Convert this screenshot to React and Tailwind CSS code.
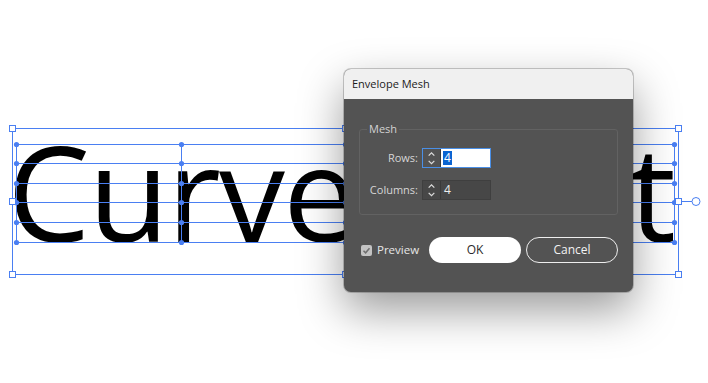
import React from "react";

const meshYs = [144.5, 163.5, 183.5, 202.5, 222.5, 242.5];
const meshXs = [16.5, 181.5, 345.5, 509.5, 674.5];
const handles = [
  [12.5, 128.5],
  [12.5, 201.5],
  [12.5, 274.5],
  [345.5, 128.5],
  [345.5, 274.5],
  [678.5, 128.5],
  [678.5, 201.5],
  [678.5, 274.5],
];

function Mesh() {
  const blue = "#4a7ff2";
  return (
    <svg className="absolute inset-0" width="708" height="383" viewBox="0 0 708 383">
      <rect x="12.5" y="128.5" width="666" height="146" fill="none" stroke={blue} strokeWidth="1" />
      {meshYs.map((y) => (
        <line key={"h" + y} x1="16.5" y1={y} x2="674.5" y2={y} stroke={blue} strokeWidth="1" />
      ))}
      {meshXs.map((x) => (
        <line key={"v" + x} x1={x} y1="144.5" x2={x} y2="242.5" stroke={blue} strokeWidth="1" />
      ))}
      {meshXs.map((x) =>
        meshYs.map((y) => <circle key={x + "-" + y} cx={x} cy={y} r="2.6" fill={blue} />)
      )}
      <line x1="681" y1="201.5" x2="692" y2="201.5" stroke={blue} strokeWidth="1" />
      <circle cx="696" cy="201.5" r="4" fill="white" stroke={blue} strokeWidth="1" />
      {handles.map(([x, y]) => (
        <rect key={x + "_" + y} x={x - 3} y={y - 3} width="6" height="6" fill="white" stroke={blue} strokeWidth="1" />
      ))}
    </svg>
  );
}

function Chevrons() {
  return (
    <svg width="18" height="18" viewBox="0 0 18 18" className="block">
      <path d="M6 6.5 L9 3.5 L12 6.5" fill="none" stroke="#dcdcdc" strokeWidth="1.3" />
      <path d="M6 12 L9 15 L12 12" fill="none" stroke="#dcdcdc" strokeWidth="1.3" />
    </svg>
  );
}

function Spinner({ value, focused }) {
  return (
    <div
      className={`flex h-[20px] w-[69px] border ${
        focused ? "border-[#4a8fe6]" : "border-[#3f3f3f] bg-[#474747]"
      }`}
    >
      <div className="flex w-[18px] items-center justify-center border-r border-[#3a3a3a]">
        <Chevrons />
      </div>
      {focused ? (
        <div className="flex flex-1 items-center bg-white pl-[2px]">
          <span className="bg-[#0a64d2] px-[1px] text-[12px] leading-[14px] text-white">{value}</span>
        </div>
      ) : (
        <div className="flex flex-1 items-center pl-[3px] text-[12px] text-[#eeeeee]">{value}</div>
      )}
    </div>
  );
}

export default function App() {
  return (
    <div className="relative h-[383px] w-[708px] overflow-hidden bg-white font-['Open_Sans',sans-serif]">
      <div className="absolute left-[7px] top-[125px] whitespace-nowrap text-[132px] leading-[132px] tracking-[-2px] [word-spacing:-47px] text-black">
        Curved Text
      </div>

      <Mesh />

      {/* Envelope Mesh dialog */}
      <div className="absolute left-[344px] top-[69px] flex h-[223px] w-[289px] flex-col overflow-hidden rounded-[7px] bg-[#535353] shadow-[0_18px_45px_rgba(0,0,0,0.4)] ring-1 ring-black/20">
        <div className="flex h-[30px] items-center bg-[#f0f0f0] pl-[8px] text-[11px] text-[#1b1b1b]">
          Envelope Mesh
        </div>
        <div className="flex flex-1 flex-col px-[15px] pt-[22px]">
          <fieldset className="rounded-[3px] border border-[#626262] pb-[14px] pt-[11px]">
            <legend className="ml-[7px] px-[2px] text-[11px] leading-[16px] text-[#d2d2d2]">Mesh</legend>
            <div className="grid grid-cols-[58px_69px] items-center gap-x-[4px] gap-y-[12px] text-[11px] text-[#d6d6d6]">
              <div className="text-right">Rows:</div>
              <Spinner value="4" focused />
              <div className="text-right">Columns:</div>
              <Spinner value="4" />
            </div>
          </fieldset>

          <div className="mt-[22px] flex items-center justify-between">
            <div className="ml-[2px] flex items-center gap-[5px]">
              <div className="flex h-[11px] w-[11px] items-center justify-center rounded-[2px] bg-[#c3c3c3]">
                <svg width="9" height="9" viewBox="0 0 9 9">
                  <path d="M1.5 4.8 L3.6 6.8 L7.5 2.2" fill="none" stroke="#6f6f6f" strokeWidth="1.5" />
                </svg>
              </div>
              <span className="text-[11.5px] text-[#e6e6e6]">Preview</span>
            </div>
            <div className="flex gap-[5px]">
              <button className="h-[26px] w-[92px] rounded-full bg-white text-[12px] text-[#2a2a2a]">OK</button>
              <button className="h-[26px] w-[92px] rounded-full border-[1.5px] border-[#eeeeee] text-[12px] text-[#f2f2f2]">
                Cancel
              </button>
            </div>
          </div>
        </div>
      </div>
    </div>
  );
}
